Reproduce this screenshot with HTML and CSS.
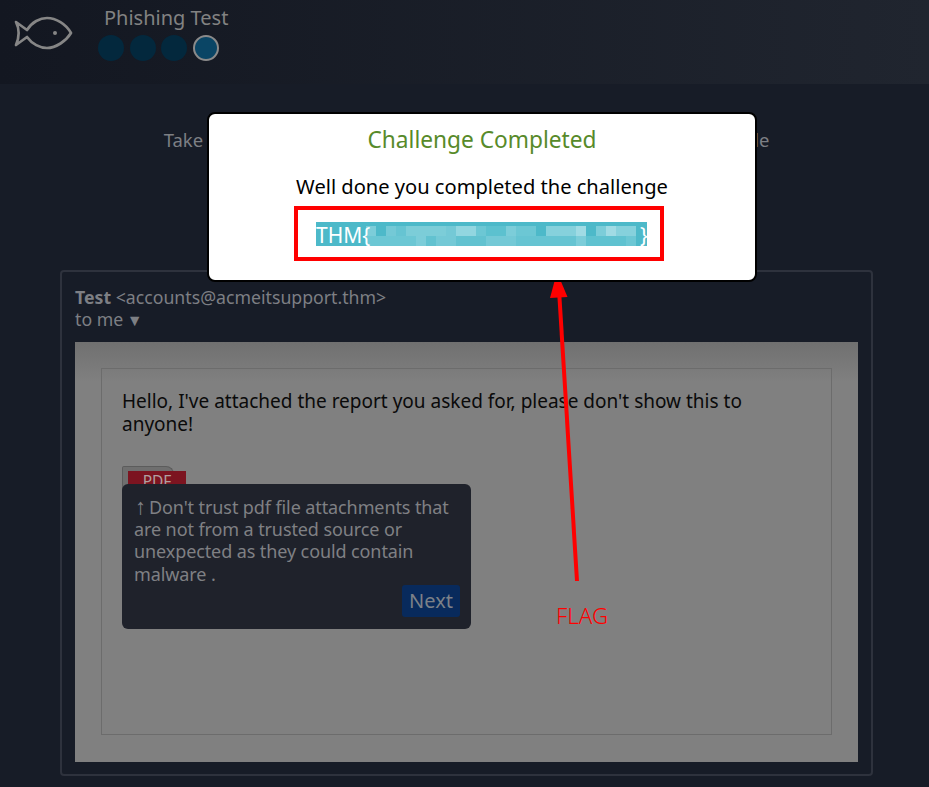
FILE: index.html
```html
<!DOCTYPE html>
<html lang="en">
<head>
  <meta charset="UTF-8" />
  <meta name="viewport" content="width=device-width, initial-scale=1.0" />
  <title>Phishing Test</title>
  <link rel="stylesheet" href="styles.css">
</head>
<body>
  <header class="topbar">
    <svg class="fish" width="60" height="34" viewBox="14 16 60 34" fill="none" stroke="#868686" stroke-width="2.700" stroke-linejoin="round">
      <path d="M16 22 L27 30 C32 22 40 18 47 18 C56 18 66 24 71 33 C66 41 56 48 47 48 C40 48 32 44 27 37 L16 45 C19 38 20 30 16 22 Z" />
      <circle cx="55" cy="33" r="2" fill="#868686" stroke="none" />
    </svg>
    <div class="topbar-text">
      <div class="room-title">Phishing Test</div>
      <div class="steps">
        <span class="step"></span>
        <span class="step"></span>
        <span class="step"></span>
        <span class="step current"></span>
      </div>
    </div>
  </header>

  <p class="intro">Take a look at the email below and use tips to complete the module</p>

  <div class="email">
    <div class="email-from"><b>Test</b> &lt;accounts@acmeitsupport.thm&gt;</div>
    <div class="email-to">to me <span class="caret">▼</span></div>
    <div class="email-body">
      <div class="email-box">
        <p class="email-text">Hello, I've attached the report you asked for, please don't show this to anyone!</p>
        <div class="pdf-icon"><span class="pdf-label">PDF</span></div>
      </div>
    </div>
  </div>

  <div class="tip">
    <div class="tip-text"><span class="tip-arrow">↑</span>Don't trust pdf file attachments that are not from a trusted source or unexpected as they could contain malware .</div>
    <div class="tip-foot"><button class="tip-next">Next</button></div>
  </div>

  <svg class="arrow" width="40" height="320" viewBox="545 270 40 320">
    <line x1="577" y1="581" x2="559" y2="290" stroke="#f00" stroke-width="4" />
    <polygon points="557,272 550,298 567.500,297" fill="#f00" />
  </svg>
  <div class="flag-note">FLAG</div>

  <div class="modal">
    <h2 class="modal-title">Challenge Completed</h2>
    <div class="modal-msg">Well done you completed the challenge</div>
    <div class="flag-box">
      <div class="flag"><span class="flag-start">THM{</span><svg class="blur" width="274" height="24" viewBox="0 0 274 24" shape-rendering="crispEdges">
        <g>
          <rect x="0" y="4" width="10" height="10" fill="#7ccdd9" /><rect x="20" y="4" width="10" height="10" fill="#74c9d6" />
          <rect x="30" y="4" width="10" height="10" fill="#66c4d2" /><rect x="40" y="4" width="40" height="10" fill="#7ccdd8" />
          <rect x="80" y="4" width="10" height="10" fill="#74c9d6" /><rect x="90" y="4" width="20" height="10" fill="#92d6e0" />
          <rect x="110" y="4" width="10" height="10" fill="#6cc7d4" /><rect x="120" y="4" width="20" height="10" fill="#5cc1cf" />
          <rect x="140" y="4" width="10" height="10" fill="#7ccdd9" /><rect x="150" y="4" width="20" height="10" fill="#6cc7d4" />
          <rect x="180" y="4" width="30" height="10" fill="#86d1dc" /><rect x="210" y="4" width="10" height="10" fill="#a0dbe4" />
          <rect x="230" y="4" width="10" height="10" fill="#7ccdd9" /><rect x="240" y="4" width="10" height="10" fill="#a0dbe4" />
          <rect x="250" y="4" width="20" height="10" fill="#86d1dc" />
        </g>
        <g>
          <rect x="0" y="14" width="50" height="10" fill="#6cc7d4" /><rect x="50" y="14" width="10" height="10" fill="#7ccdd9" />
          <rect x="60" y="14" width="10" height="10" fill="#62c2d0" /><rect x="70" y="14" width="20" height="10" fill="#74c9d6" />
          <rect x="90" y="14" width="30" height="10" fill="#62c2d0" /><rect x="120" y="14" width="30" height="10" fill="#74c9d6" />
          <rect x="150" y="14" width="60" height="10" fill="#66c4d2" /><rect x="210" y="14" width="10" height="10" fill="#7ccdd9" />
          <rect x="220" y="14" width="40" height="10" fill="#5fc2d0" /><rect x="260" y="14" width="10" height="10" fill="#6cc7d4" />
        </g>
      </svg><span>}</span></div>
    </div>
  </div>
</body>
</html>
```

FILE: styles.css
```css
body {
  margin: 0;
  height: 787px;
  overflow: hidden;
  position: relative;
  background: #171c27;
  font-family: "Noto Sans", sans-serif;
  color: #808080;
}

.topbar {
  height: 84px;
  background: linear-gradient(90deg, #131721, #20252f);
  display: flex;
  align-items: flex-start;
  padding: 0 0 0 14px;
}
.fish { margin-top: 16px; flex: none; }
.topbar-text { margin-left: 24px; }
.room-title { font-size: 20px; line-height: 24px; margin: 6px 0 0 6px; color: #828282; }
.steps { display: flex; gap: 5.500px; margin-top: 5px; }
.step { width: 26px; height: 26px; border-radius: 50%; background: #03283d; box-sizing: border-box; }
.step.current { background: #0a4565; border: 2.500px solid #8a8a8a; }

.intro {
  margin: 43px 0 0;
  padding-left: 4px;
  text-align: center;
  font-size: 18.500px;
  line-height: 26px;
  word-spacing: 1.650px;
  color: #7d7f84;
  white-space: nowrap;
}

.email {
  margin: 117px 56px 0 60px;
  height: 502px;
  border: 2px solid #2e323d;
  border-radius: 4px;
  padding: 0 13px;
}
.email-from { font-size: 17.700px; line-height: 22px; margin-top: 14px; color: #7d7f84; }
.email-to { font-size: 17.700px; line-height: 22px; color: #7d7f84; }
.caret { font-size: 16px; margin-left: -1px; }
.email-body {
  margin-top: 11px;
  height: 420px;
  background: linear-gradient(#707070, #808080 40px);
  padding: 26px;
  box-sizing: border-box;
}
.email-box {
  height: 367px;
  border: 1px solid #6c6c6c;
  padding: 21px 20px;
  box-sizing: border-box;
  color: #000;
}
.email-text { margin: 0; font-size: 19px; line-height: 23px; color: #0a0a0a; }
.pdf-icon {
  margin-top: 30px;
  width: 50px;
  height: 30px;
  position: relative;
  background: #6f6f6f;
  border: 1px solid #5c5c5c;
  border-bottom: 0;
  border-radius: 2px 8px 0 0;
}
.pdf-label {
  position: absolute;
  left: 5px;
  top: 4px;
  width: 58px;
  height: 30px;
  background: #7c1420;
  color: #b0a0a0;
  font-size: 15.500px;
  line-height: 20px;
  text-align: center;
}

.tip {
  position: absolute;
  left: 122px;
  top: 484px;
  width: 349px;
  height: 145px;
  box-sizing: border-box;
  background: #1f222b;
  border-radius: 6px;
  padding: 11px 12px 0;
  color: #7f8084;
}
.tip-text { font-size: 18px; line-height: 22.200px; letter-spacing: -0.100px; }
.tip-arrow { display: inline-block; width: 15px; padding-left: 1px; font-size: 22px; line-height: 20px; box-sizing: border-box; }
.tip-foot { display: flex; justify-content: flex-end; }
.tip-next {
  width: 58px;
  height: 32px;
  border: 0;
  border-radius: 3px;
  background: #082a5c;
  color: #7c8188;
  font-family: "Noto Sans", sans-serif;
  font-size: 20px;
  padding: 0;
  margin-right: -1px;
}

.arrow { position: absolute; left: 545px; top: 270px; }
.flag-note { position: absolute; left: 556px; top: 602px; font-size: 22.300px; line-height: 28px; font-weight: 300; color: #f00; }

.modal {
  position: absolute;
  left: 207px;
  top: 112px;
  width: 550px;
  height: 170px;
  box-sizing: border-box;
  background: #fff;
  border: 2px solid #000;
  border-radius: 8px;
  color: #000;
  text-align: center;
}
.modal-title { margin: 11px 0 0; font-size: 22.700px; line-height: 30px; font-weight: 400; color: #578a2a; }
.modal-msg { font-size: 20.100px; line-height: 26px; margin-top: 19px; }
.flag-box {
  margin: 6px 0 0 85px;
  width: 370px;
  height: 55px;
  box-sizing: border-box;
  border: 4px solid #f00;
  display: flex;
  align-items: center;
  padding-left: 18px;
}
.flag {
  display: flex;
  height: 24px;
  width: 331px;
  background: #4db9c9;
  color: #fff;
  font-size: 21px;
  line-height: 27px;
  white-space: nowrap;
}
.flag-start { width: 50px; position: relative; z-index: 1; }
.blur { flex: none; }
```
